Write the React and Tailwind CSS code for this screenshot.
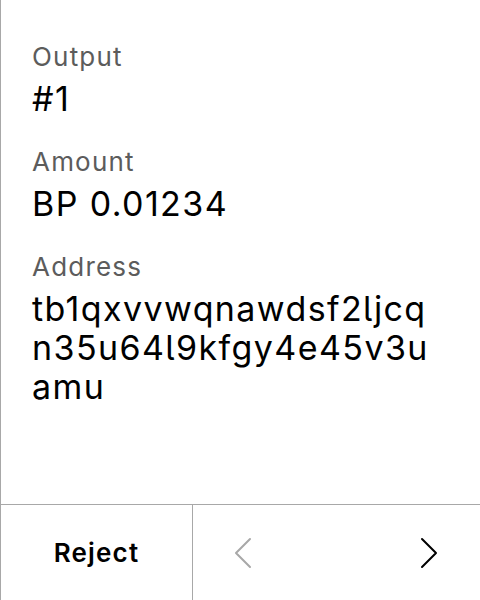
import React from "react";

function Chevron({ dir = "right", className = "" }) {
  const points = dir === "right" ? "2,2 16,16 2,30" : "16,2 2,16 16,30";
  return (
    <svg width="18" height="32" viewBox="0 0 18 32" fill="none" className={className}>
      <polyline points={points} stroke="currentColor" strokeWidth="2" strokeLinecap="round" strokeLinejoin="round" />
    </svg>
  );
}

const fields = [
  { label: "Output", value: "#1" },
  { label: "Amount", value: "BP 0.01234" },
  { label: "Address", value: "tb1qxvvwqnawdsf2ljcqn35u64l9kfgy4e45v3uamu" },
];

export default function App() {
  return (
    <div className="w-[480px] h-[600px] bg-white flex flex-col border-l border-[#a8a8a8] text-black font-['Inter','Noto_Sans',sans-serif] [font-feature-settings:'cv05']">
      {/* Details */}
      <div className="flex-1 flex flex-col gap-7 pl-[31px] pr-10 pt-[41px]">
        {fields.map((f) => (
          <div key={f.label} className="flex flex-col">
            <span className="text-[26px] leading-8 tracking-[1.2px] text-[#5c5c5c]">{f.label}</span>
            <span className="mt-1.5 text-[34px] leading-[39px] tracking-[1.4px] break-all">{f.value}</span>
          </div>
        ))}
      </div>

      {/* Footer actions */}
      <div className="h-24 shrink-0 flex border-t border-[#a8a8a8]">
        <button className="w-48 flex items-center justify-center border-r border-[#a8a8a8] text-[26px] tracking-[1.2px] font-semibold">
          Reject
        </button>
        <div className="flex-1 flex items-center justify-between pl-[41px] pr-[42px]">
          <button className="text-[#a8a8a8]">
            <Chevron dir="left" />
          </button>
          <button className="text-black">
            <Chevron dir="right" />
          </button>
        </div>
      </div>
    </div>
  );
}
